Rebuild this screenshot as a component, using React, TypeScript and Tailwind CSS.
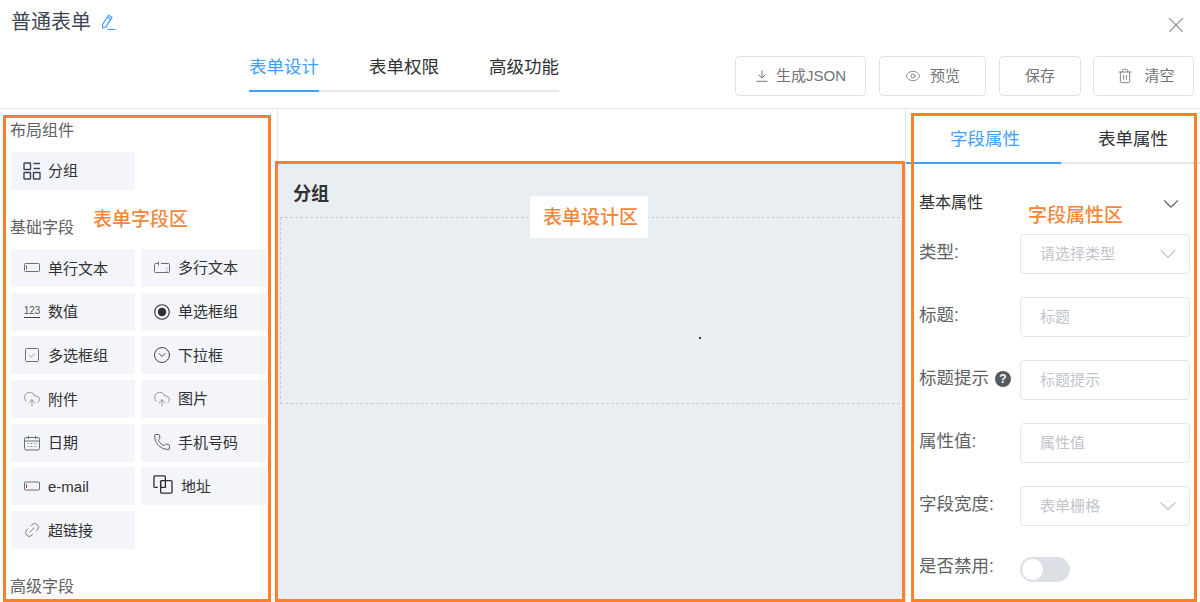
import React from 'react';
import { X, Eye, Trash2, ChevronDown, Phone, Link2, CloudUpload, CircleChevronDown } from 'lucide-react';

const iconCls = 'w-[16px] h-[16px] shrink-0 text-[#6b6f78]';

const PencilIcon = () => (
  <svg viewBox="0 0 16 17" className="w-[16px] h-[17px] shrink-0 text-[#409eff]" fill="none" stroke="currentColor" strokeWidth="1.2">
    <path d="M2.500 10.500L8.500 1.200l3.500 2.200-6 9.300-3.300 1.300z" />
    <path d="M7.300 3.200l3.500 2.200" />
    <path d="M7.500 15.500h8" />
  </svg>
);

const DownloadIcon = () => (
  <svg viewBox="0 0 12 12" className="w-[12px] h-[12px] shrink-0" fill="none" stroke="currentColor" strokeWidth="1">
    <path d="M6 0.500v7.500M2.800 4.800L6 8l3.200-3.200M0.500 11.300h11" />
  </svg>
);

const SingleLineIcon = () => (
  <svg viewBox="0 0 16 16" className={iconCls} fill="none" stroke="currentColor" strokeWidth="1">
    <rect x="0.5" y="3.5" width="15" height="8" rx="1" />
    <path d="M2.5 5.5v4" stroke="#b0486c" />
  </svg>
);

const MultiLineIcon = () => (
  <svg viewBox="0 0 16 16" className={iconCls} fill="none" stroke="currentColor" strokeWidth="1">
    <path d="M4 3.5H1.5a1 1 0 0 0-1 1v7a1 1 0 0 0 1 1h13a1 1 0 0 0 1-1v-7a1 1 0 0 0-1-1H7" />
    <path d="M4.5 1.5v4" />
    <path d="M12 7.5l1 1 1-1M12 10.5l1 1 1-1" strokeWidth="0.7" />
  </svg>
);

const NumberIcon = () => (
  <span className="w-[16px] shrink-0 flex flex-col items-center leading-none text-[10px] text-[#555] border-b border-[#444] pb-[1px]">123</span>
);

const RadioIcon = () => (
  <svg viewBox="0 0 16 16" className="w-[16px] h-[16px] shrink-0 text-[#303133]" fill="none" stroke="currentColor">
    <circle cx="8" cy="8" r="7.3" strokeWidth="1.1" />
    <circle cx="8" cy="8" r="4.2" fill="currentColor" stroke="none" />
  </svg>
);

const CheckIcon = () => (
  <svg viewBox="0 0 16 16" className={iconCls} fill="none" stroke="currentColor" strokeWidth="1">
    <rect x="1.5" y="1.5" width="13" height="13" rx="1" />
    <path d="M5 8l2.2 2.2L11 6.5" stroke="#a0a3aa" />
  </svg>
);

const CalendarIcon = () => (
  <svg viewBox="0 0 16 16" className={iconCls} fill="none" stroke="currentColor" strokeWidth="1">
    <rect x="0.5" y="2.5" width="15" height="12.5" rx="1.5" />
    <path d="M0.5 6h15M4.5 1v3M11.5 1v3" />
    <path d="M3.5 8.5h2M7 8.5h2M10.500 8.5h2M3.500 11.500h2M7 11.500h2M10.500 11.500h2" strokeWidth="0.9" strokeDasharray="1 0.6" />
  </svg>
);

const MailIcon = () => (
  <svg viewBox="0 0 16 16" className={iconCls} fill="none" stroke="currentColor" strokeWidth="1">
    <rect x="0.5" y="4" width="15" height="8" rx="1" />
    <path d="M2.5 6v4" stroke="#b0486c" />
  </svg>
);

const AddressIcon = () => (
  <svg viewBox="0 0 21 20" className="w-[20px] h-[19px] shrink-0 -ml-[1px] -mt-[3px] text-[#303133]" fill="none" stroke="currentColor" strokeWidth="1.4">
    <path d="M5 13H2a1 1 0 0 1-1-1V2a1 1 0 0 1 1-1h10a1 1 0 0 1 1 1v4" />
    <rect x="8" y="6" width="12" height="13" rx="1" />
    <path d="M8 6v6a1 1 0 0 0 1 1h4V6" />
  </svg>
);

const GroupIcon = () => (
  <svg viewBox="0 0 18 18" className="w-[18px] h-[18px] shrink-0 text-[#3c4354]" fill="none" stroke="currentColor" strokeWidth="1.4">
    <rect x="1" y="1" width="6.500" height="6.500" rx="0.5" />
    <rect x="1" y="10.500" width="6.500" height="6.500" rx="0.5" />
    <rect x="10.500" y="10.500" width="6.500" height="6.500" rx="0.5" />
    <path d="M10.500 1.500h6.500M10.500 6.500h6.500" />
  </svg>
);

type Field = { name: string; icon: React.ReactNode };

const fields: Field[] = [
  { name: '单行文本', icon: <SingleLineIcon /> },
  { name: '多行文本', icon: <MultiLineIcon /> },
  { name: '数值', icon: <NumberIcon /> },
  { name: '单选框组', icon: <RadioIcon /> },
  { name: '多选框组', icon: <CheckIcon /> },
  { name: '下拉框', icon: <CircleChevronDown size={18} strokeWidth={1.2} className="shrink-0 -mx-[1px] text-[#303133]" /> },
  { name: '附件', icon: <CloudUpload size={18} strokeWidth={1} className="shrink-0 -mx-[1px] text-[#777]" /> },
  { name: '图片', icon: <CloudUpload size={18} strokeWidth={1} className="shrink-0 -mx-[1px] text-[#777]" /> },
  { name: '日期', icon: <CalendarIcon /> },
  { name: '手机号码', icon: <Phone size={18} strokeWidth={1.1} className="shrink-0 -mx-[1px] -mt-[2px] text-[#444]" /> },
  { name: 'e-mail', icon: <MailIcon /> },
  { name: '地址', icon: <AddressIcon /> },
  { name: '超链接', icon: <Link2 size={18} strokeWidth={1} className="shrink-0 -mx-[1px] text-[#666] -rotate-45" /> },
];

const FieldItem = ({ name, icon, odd }: Field & { odd: boolean }) => (
  <div className="h-[38px] bg-[#f3f5fa] flex items-center gap-[8px] pl-[13px] text-[15px] text-[#303133]">
    {icon}
    <span className={odd ? 'pt-[1px]' : 'pt-[2px]'}>{name}</span>
  </div>
);

const TextBox = ({ placeholder, select }: { placeholder: string; select?: boolean }) => (
  <div className="w-[170px] h-[40px] shrink-0 border border-[#e2e4ec] rounded-[4px] flex items-center justify-between pl-[19px] pr-[7px] text-[15px] text-[#c0c4cc]">
    <span className="pt-[1px]">{placeholder}</span>
    {select && <ChevronDown size={28} strokeWidth={1} className="text-[#c0c4cc]" />}
  </div>
);

export default function App() {
  return (
    <div className="relative w-[1200px] h-[602px] overflow-hidden bg-white font-['Liberation_Sans','Noto_Sans_CJK_SC',sans-serif]">
      <header className="h-[109px] border-b border-[#e4e7ed]">
        <div className="h-[54px] flex items-start justify-between pl-[11px] pr-[11px] pt-[8px]">
          <div className="flex items-center gap-[9px] h-[28px]">
            <span className="text-[20px] text-[#3c4654]">普通表单</span>
            <PencilIcon />
          </div>
          <X size={26} strokeWidth={1} className="text-[#909399] mt-[4px]" />
        </div>
        <div className="flex items-start pl-[249px] pr-[6px]">
          <div className="flex gap-[50px] border-b-2 border-[#e4e7ed] h-[38px] text-[17.5px] text-[#303133] leading-[26px]">
            <span className="h-[38px] border-b-2 border-[#409eff] text-[#409eff]">表单设计</span>
            <span>表单权限</span>
            <span>高级功能</span>
          </div>
          <div className="ml-auto flex gap-[13px] text-[15px] text-[#707378] mt-[2px]">
            <button className="w-[131px] h-[40px] border border-[#dfe1e8] rounded-[4px] flex items-center justify-center gap-[8px] pl-[1px]">
              <DownloadIcon />
              生成JSON
            </button>
            <button className="w-[107px] h-[40px] border border-[#dfe1e8] rounded-[4px] flex items-center justify-center gap-[9px]">
              <Eye size={16} strokeWidth={1.2} />
              预览
            </button>
            <button className="w-[82px] h-[40px] border border-[#dfe1e8] rounded-[4px] flex items-center justify-center">保存</button>
            <button className="w-[101px] h-[40px] -ml-[1px] border border-[#dfe1e8] rounded-[4px] flex items-center justify-center gap-[11px] pl-[5px]">
              <Trash2 size={16} strokeWidth={1.3} />
              清空
            </button>
          </div>
        </div>
      </header>

      <main className="flex h-[493px]">
        <aside className="w-[278px] shrink-0 border-r border-[#e4e7ed] pl-[10px] overflow-hidden">
          <div className="mt-[11px] mb-[10px] h-[22px] leading-[22px] text-[16px] text-[#606266]">布局组件</div>
          <div className="w-[124px] ml-[1px] h-[38px] bg-[#f3f5fa] flex items-center gap-[7px] pl-[12px] text-[15px] text-[#303133]">
            <GroupIcon />
            <span className="pt-[1px]">分组</span>
          </div>
          <div className="mt-[27px] mb-[10px] h-[22px] leading-[22px] text-[16px] text-[#606266]">基础字段</div>
          <div className="grid grid-cols-[124px_125px] gap-x-[6px] gap-y-[5.67px] ml-[1px]">
            {fields.map((f, i) => (
              <FieldItem key={f.name} {...f} odd={i % 2 === 1} />
            ))}
          </div>
          <div className="mt-[27px] h-[22px] leading-[22px] text-[16px] text-[#606266]">高级字段</div>
        </aside>

        <section className="flex-1 pt-[55px]">
          <div className="h-[438px] bg-[#e9eef2] pt-[17px]">
            <div className="pl-[15px] h-[26px] leading-[26px] text-[18px] font-bold text-[#303133]">分组</div>
            <div className="relative mt-[10px] ml-[2px] h-[187px] border border-dashed border-[#c8ccd0]">
              <span className="absolute left-[418px] top-[119px] w-[2px] h-[2px] rounded-full bg-black" />
            </div>
          </div>
        </section>

        <aside className="w-[295px] shrink-0 border-l border-[#e4e7ed] pr-[10px]">
          <div className="flex h-[55px] mr-[-10px] text-[17.5px] text-[#303133]">
            <div className="w-[155px] flex items-center justify-center pt-[8px] pl-[3px] text-[#409eff] border-b-2 border-[#409eff]">字段属性</div>
            <div className="flex-1 flex items-center border-b-2 border-[#e4e7ed] pl-[37px] pt-[8px]">表单属性</div>
          </div>
          <div className="pl-[13px]">
            <div className="mt-[27px] mb-[21px] h-[22px] flex items-center justify-between pr-[6px] text-[16px] text-[#303133]">
              <span className="pt-[1px]">基本属性</span>
              <ChevronDown size={26} strokeWidth={1} className="text-[#606266] mt-[3px]" />
            </div>
            <div className="flex flex-col gap-[23px]">
              {[
                { label: '类型:', placeholder: '请选择类型', select: true },
                { label: '标题:', placeholder: '标题' },
                { label: '标题提示', placeholder: '标题提示', help: true },
                { label: '属性值:', placeholder: '属性值' },
                { label: '字段宽度:', placeholder: '表单栅格', select: true },
              ].map((row) => (
                <div key={row.label} className="flex items-center justify-between">
                  <div className="flex items-center gap-[6px] pb-[3px] text-[17.5px] text-[#606266]">
                    {row.label}
                    {row.help && (
                      <span className="w-[16px] h-[16px] rounded-full bg-[#55585f] text-white text-[12px] font-bold leading-[16px] text-center">?</span>
                    )}
                  </div>
                  <TextBox placeholder={row.placeholder} select={row.select} />
                </div>
              ))}
              <div className="flex items-center justify-between h-[40px]">
                <div className="pb-[5px] text-[17.5px] text-[#606266]">是否禁用:</div>
                <div className="w-[170px]">
                  <div className="w-[50px] h-[25px] rounded-full bg-[#dcdfe6] flex items-center pl-[2px]">
                    <div className="w-[21px] h-[21px] rounded-full bg-white" />
                  </div>
                </div>
              </div>
            </div>
          </div>
        </aside>
      </main>

      {/* annotation frames drawn over the screen */}
      <div className="absolute left-[3px] top-[115px] w-[268px] h-[487px] border-[3px] border-[#ff7f2a] pointer-events-none" />
      <div className="absolute left-[275px] top-[161px] w-[630px] h-[441px] border-[3px] border-[#ff7f2a] pointer-events-none" />
      <div className="absolute left-[911px] top-[113px] w-[286px] h-[489px] border-[3px] border-[#ff7f2a] pointer-events-none" />
      <span className="absolute left-[93px] top-[208px] text-[19px] leading-[24px] font-medium text-[#f5873b]">表单字段区</span>
      <span className="absolute left-[530px] top-[196px] w-[118px] h-[42px] bg-white pl-[13px] text-[19px] leading-[43px] font-medium text-[#f5873b]">表单设计区</span>
      <span className="absolute left-[1028px] top-[204px] text-[19px] leading-[24px] font-medium text-[#f5873b]">字段属性区</span>
    </div>
  );
}
